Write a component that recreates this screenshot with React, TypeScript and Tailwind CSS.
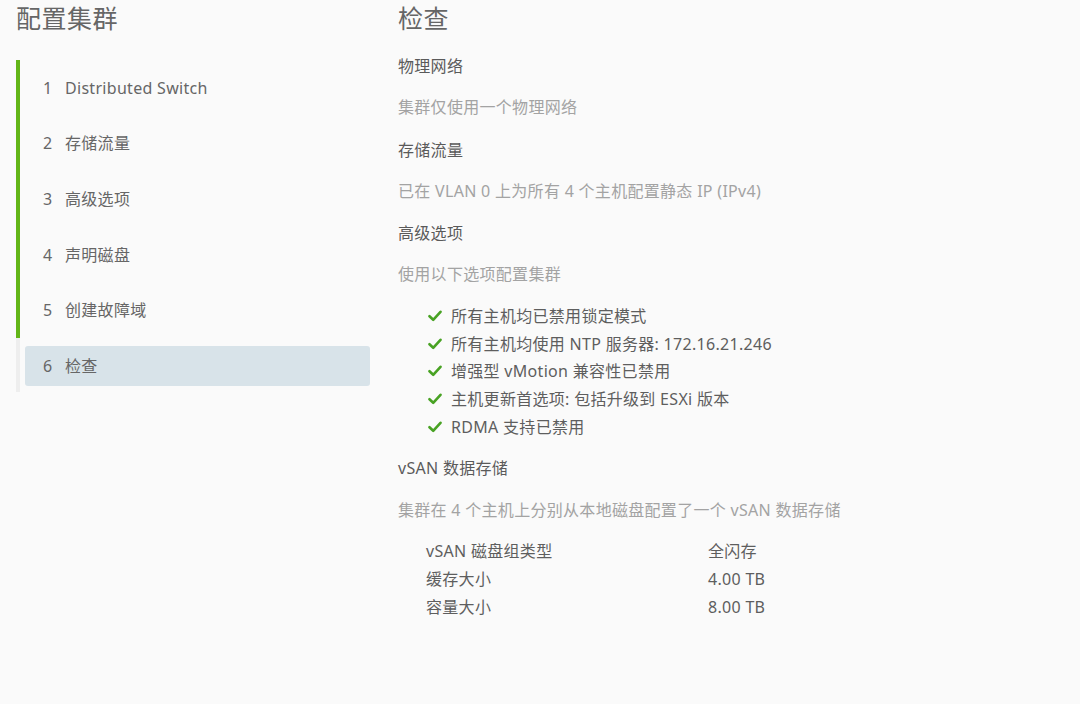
import React from "react";

const STEPS = ["Distributed Switch", "存储流量", "高级选项", "声明磁盘", "创建故障域", "检查"];

const CHECKS = [
  "所有主机均已禁用锁定模式",
  "所有主机均使用 NTP 服务器: 172.16.21.246",
  "增强型 vMotion 兼容性已禁用",
  "主机更新首选项: 包括升级到 ESXi 版本",
  "RDMA 支持已禁用",
];

const ROWS = [
  ["vSAN 磁盘组类型", "全闪存"],
  ["缓存大小", "4.00 TB"],
  ["容量大小", "8.00 TB"],
];

function Check() {
  return (
    <svg width="14" height="12" viewBox="0 0 14 12" className="shrink-0">
      <path d="M1.5 6.2 L5.2 9.8 L12.5 1.8" fill="none" stroke="#48a223" strokeWidth="2.6" strokeLinecap="round" strokeLinejoin="round" />
    </svg>
  );
}

export default function App() {
  const font = { fontFamily: '"Noto Sans", "Noto Sans CJK SC", sans-serif' };
  return (
    <div className="flex h-[704px] w-[1080px] overflow-hidden bg-[#fafafa] tracking-[0.3px]" style={font}>
      <div className="w-[370px] shrink-0 pl-4">
        <h1 className="h-9 text-[25px] leading-9 tracking-[0.5px] text-[#666]">配置集群</h1>
        <div className="mt-6">
          {STEPS.map((s, i) => {
            const current = i === STEPS.length - 1;
            return (
              <div
                key={s}
                className={`flex border-l-4 pl-[5px] ${current ? "h-[54px] items-start border-[#eeeeee] pt-2" : "h-[55.6px] items-center border-[#62b517]"}`}
              >
                <div className={`flex h-10 flex-1 items-center rounded-[3px] pl-[18px] text-[16px] text-[#666] ${current ? "bg-[#d8e3e9]" : ""}`}>
                  <span className="w-[22px]">{i + 1}</span>
                  <span>{s}</span>
                </div>
              </div>
            );
          })}
        </div>
      </div>

      <div className="ml-7 flex-1 text-[16px] leading-6">
        <h2 className="h-9 text-[25px] leading-9 tracking-[0.5px] text-[#666]">检查</h2>

        <div className="mt-[18px] text-[#5a5a5a]">物理网络</div>
        <div className="mt-[17px] text-[#a3a3a3]">集群仅使用一个物理网络</div>

        <div className="mt-[19px] text-[#5a5a5a]">存储流量</div>
        <div className="mt-[17px] text-[#a3a3a3]">已在 VLAN 0 上为所有 4 个主机配置静态 IP (IPv4)</div>

        <div className="mt-[18px] text-[#5a5a5a]">高级选项</div>
        <div className="mt-[17px] text-[#a3a3a3]">使用以下选项配置集群</div>

        <ul className="mt-4 pl-[30px]">
          {CHECKS.map((c) => (
            <li key={c} className="flex h-[27.7px] items-center gap-[9px] text-[#5e5e5e]">
              <Check />
              <span>{c}</span>
            </li>
          ))}
        </ul>

        <div className="mt-4 text-[#5a5a5a]">vSAN 数据存储</div>
        <div className="mt-[18px] text-[#a3a3a3]">集群在 4 个主机上分别从本地磁盘配置了一个 vSAN 数据存储</div>

        <div className="mt-[15px] pl-7">
          {ROWS.map(([k, v]) => (
            <div key={k} className="flex h-7 items-center text-[#5e5e5e]">
              <span className="w-[282px]">{k}</span>
              <span>{v}</span>
            </div>
          ))}
        </div>
      </div>
    </div>
  );
}
